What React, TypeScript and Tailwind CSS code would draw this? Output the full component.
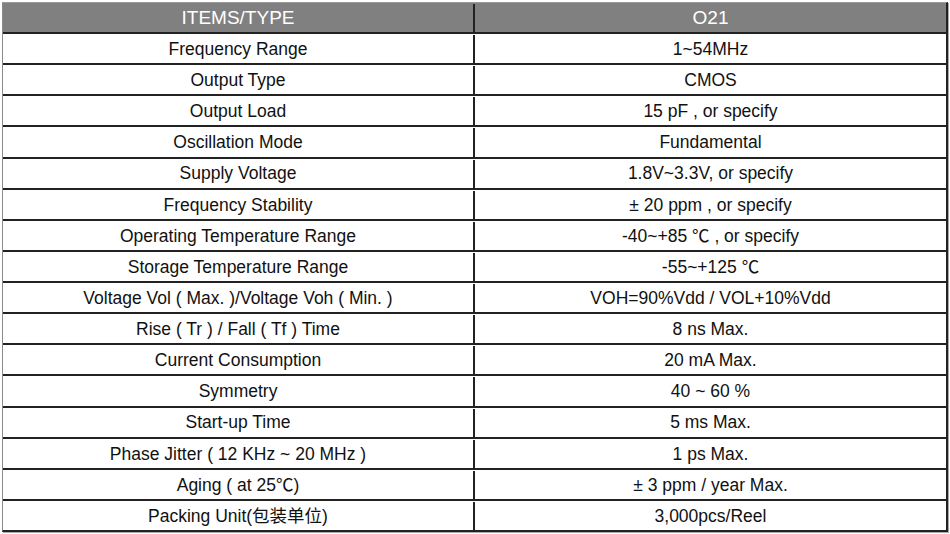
const rows: [string, string][] = [
  ["Frequency Range", "1~54MHz"],
  ["Output Type", "CMOS"],
  ["Output Load", "15 pF , or specify"],
  ["Oscillation Mode", "Fundamental"],
  ["Supply Voltage", "1.8V~3.3V, or specify"],
  ["Frequency Stability", "± 20 ppm , or specify"],
  ["Operating Temperature Range", "-40~+85 ℃ , or specify"],
  ["Storage Temperature Range", "-55~+125 ℃"],
  ["Voltage Vol ( Max. )/Voltage Voh ( Min. )", "VOH=90%Vdd / VOL+10%Vdd"],
  ["Rise ( Tr ) / Fall ( Tf ) Time", "8 ns Max."],
  ["Current Consumption", "20 mA Max."],
  ["Symmetry", "40 ~ 60 %"],
  ["Start-up Time", "5 ms Max."],
  ["Phase Jitter ( 12 KHz ~ 20 MHz )", "1 ps Max."],
  ["Aging ( at 25℃)", "± 3 ppm / year Max."],
  ["Packing Unit(包装单位)", "3,000pcs/Reel"],
];

export default function App() {
  return (
    <div className="w-[950px] h-[534px] bg-white pt-[2px] pl-[2px] font-['Liberation_Sans','Noto_Sans_CJK_SC',Arial,sans-serif] text-[17.5px] text-[#111]">
      <div className="flex h-[530px] w-[946px] flex-col border-l border-t border-l-[#8a8a8a] border-t-[#9a9a9a] border-r-2 border-b-2 border-r-[#222] border-b-[#222] shadow-[1px_1px_0_#aaa]">
        {/* header */}
        <div className="flex h-[31px] shrink-0 border-b-2 border-[#222] bg-[#808080] pt-[1px] text-[19px] text-white">
          <div className="flex w-[472px] items-center justify-center border-r-2 border-[#222]">ITEMS/TYPE</div>
          <div className="flex flex-1 items-center justify-center">O21</div>
        </div>
        {rows.map(([k, v], i) => (
          <div
            key={k}
            className={
              "flex flex-1 pt-[1px] " + (i < rows.length - 1 ? "border-b-2 border-[#222]" : "")
            }
          >
            <div className="flex w-[472px] items-center justify-center border-r-2 border-[#222]">{k}</div>
            <div className="flex flex-1 items-center justify-center">{v}</div>
          </div>
        ))}
      </div>
    </div>
  );
}
